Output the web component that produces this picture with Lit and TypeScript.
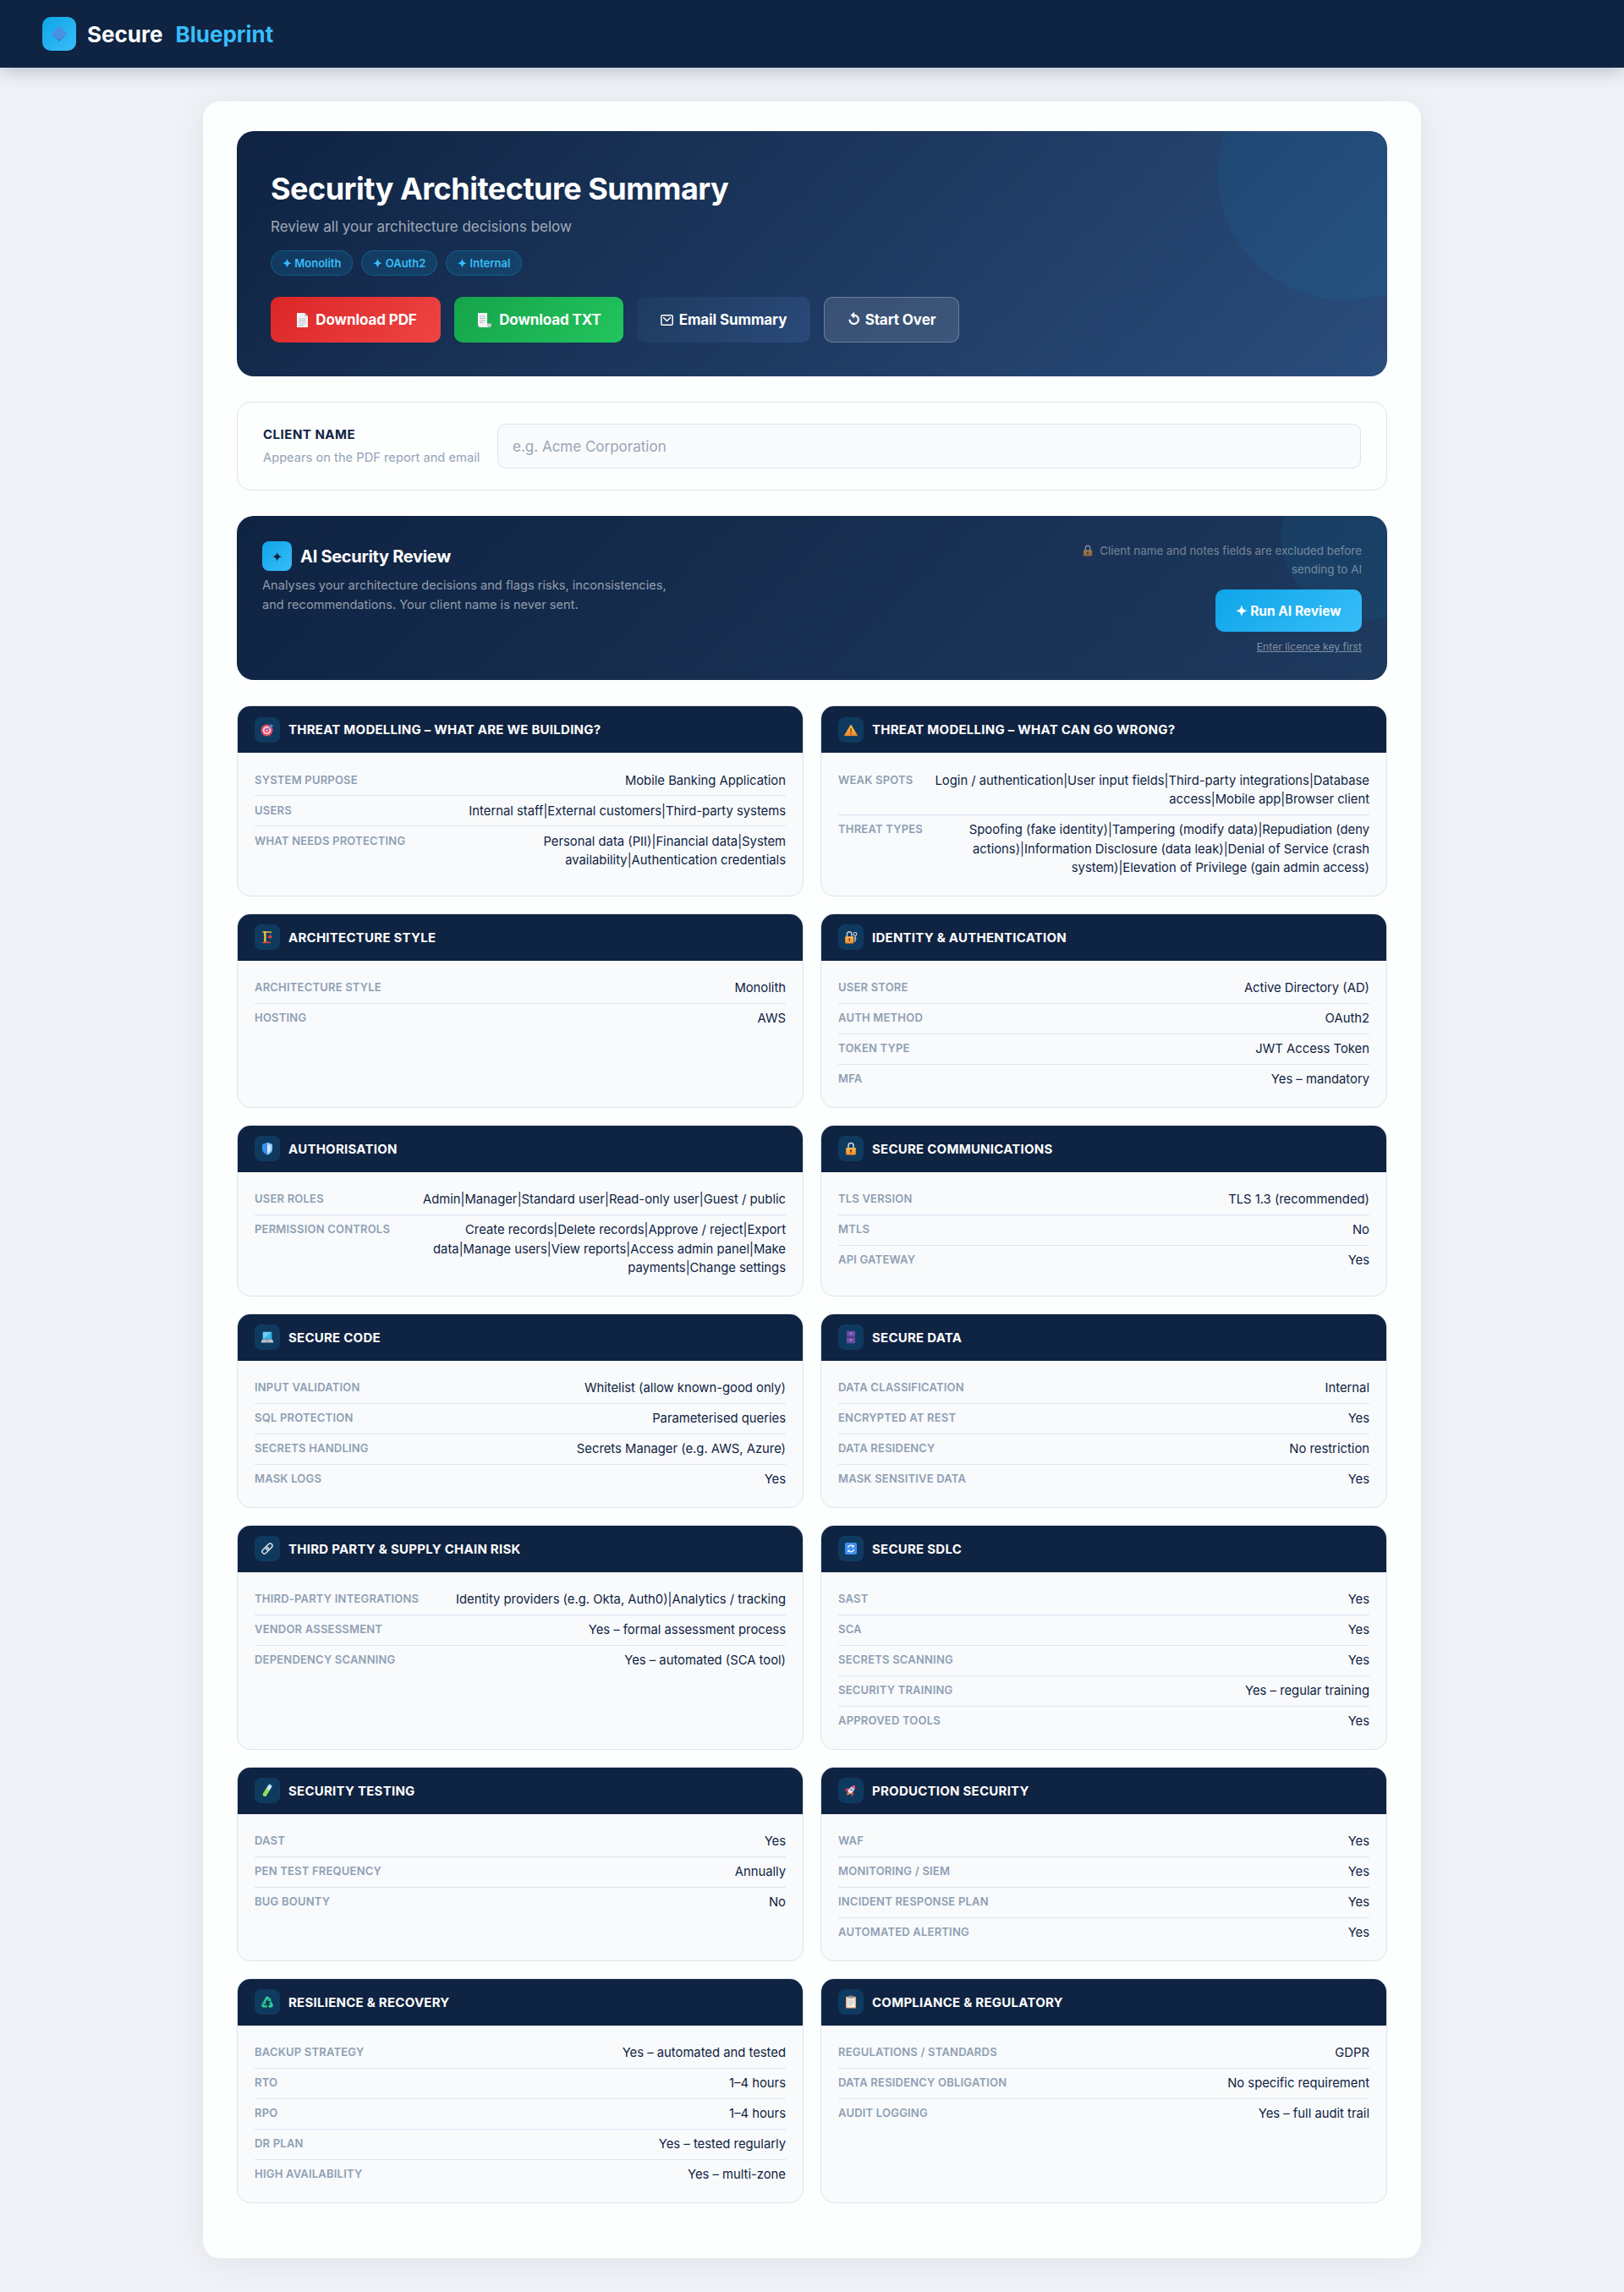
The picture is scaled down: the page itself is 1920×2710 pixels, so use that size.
import { LitElement, html, css, svg } from "lit";
import { customElement } from "lit/decorators.js";

type Row = [string, string];
interface Section { icon: string; title: string; rows: Row[] }

const orangeDef = svg`<defs><linearGradient id="og" x1="0" y1="0" x2="0" y2="1"><stop offset="0" stop-color="#fdbb4e"/><stop offset="1" stop-color="#f28a2a"/></linearGradient></defs>`;

const art: Record<string, unknown> = {
  target: svg`<circle cx="7.5" cy="8.5" r="7" fill="#e8456b"/><circle cx="7.5" cy="8.5" r="4.7" fill="#fbdfe6"/><circle cx="7.5" cy="8.5" r="3" fill="#e8456b"/><circle cx="7.5" cy="8.5" r="1.2" fill="#fbdfe6"/><path d="M7.5 8.5L12.6 3.4" stroke="#3c9eea" stroke-width="1.3"/><path d="M11.4 2.9L13 1l.5 1.6L15.2 3l-2 1.7z" fill="#3c9eea"/>`,
  warn: svg`${orangeDef}<path d="M8 2.2L15.5 14.6H.5z" fill="url(#og)" stroke="url(#og)" stroke-width="1" stroke-linejoin="round"/><rect x="7.3" y="6" width="1.4" height="5" rx=".6" fill="#7a4a12"/><circle cx="8" cy="12.6" r=".85" fill="#7a4a12"/>`,
  crane: svg`<rect x="4" y="1" width="2.6" height="13" fill="#f3c13e"/><path d="M4 3l2.6 2.5M6.6 5.5L4 8l2.6 2.5L4 13" stroke="#9a7420" stroke-width=".5" fill="none"/><rect x="2.2" y="1.4" width="11" height="1.4" fill="#f3c13e"/><rect x="11" y="2.8" width=".6" height="3.4" fill="#55606e"/><rect x="9.2" y="6.2" width="4.2" height="3" fill="#e0443e"/><rect x="2.2" y="13.6" width="9.6" height="1.6" fill="#e0443e"/>`,
  lockkey: svg`${orangeDef}<path d="M3.4 8V4.6a2.8 2.8 0 0 1 5.6 0V8" fill="none" stroke="#c9ced6" stroke-width="1.4"/><rect x="1.2" y="7.2" width="10" height="8.2" rx="1" fill="url(#og)"/><circle cx="6.2" cy="10.6" r="1.1" fill="#5b3712"/><rect x="5.8" y="10.8" width=".8" height="2.4" fill="#5b3712"/><circle cx="13" cy="4.4" r="1.9" fill="none" stroke="#d5d9df" stroke-width="1.1"/><path d="M13 6.300V12.500l-1 .9M13 9.800h1.400" fill="none" stroke="#d5d9df" stroke-width="1.2"/>`,
  shield: svg`<path d="M8 .8L14 3v5.2c0 3.6-2.8 6-6 7.2-3.2-1.2-6-3.6-6-7.2V3z" fill="#3a90ea"/><path d="M8 .8L14 3v5.2c0 3.6-2.8 6-6 7.2z" fill="#8ec8f7"/><path d="M8 3l3.8 1.4v3.8c0 2.3-1.6 3.9-3.8 4.9z" fill="#d5ebfc"/>`,
  lock: svg`${orangeDef}<path d="M5 7.6V4.4a3 3 0 0 1 6 0v3.2" fill="none" stroke="#d6d9de" stroke-width="1.5"/><rect x="2.2" y="7" width="11.6" height="8.4" rx="1" fill="url(#og)"/><circle cx="8" cy="10.5" r="1.2" fill="#5b3712"/><rect x="7.5" y="10.7" width="1" height="2.5" fill="#5b3712"/>`,
  laptop: svg`<rect x="2.4" y="1.4" width="11.2" height="9.4" rx=".8" fill="#5d7f97"/><rect x="3.2" y="2.2" width="9.6" height="7.8" fill="#2fb7f0"/><path d="M3.2 2.2h9.6L3.2 10z" fill="#6ed0f7"/><path d="M2 10.8h12l1.6 3.6H.4z" fill="#bcc3ce"/><rect x="6" y="12" width="4" height="1" fill="#8b94a3"/>`,
  cabinet: svg`<rect x="3" y=".8" width="10" height="14.4" rx=".6" fill="#6a4ea8"/><rect x="3" y="7.5" width="10" height="1" fill="#35295f"/><rect x="6.4" y="3" width="3.2" height="1.4" fill="#a996dc"/><rect x="6.4" y="10.6" width="3.2" height="1.4" fill="#a996dc"/>`,
  chain: svg`<g transform="rotate(-45 8 8)" fill="none" stroke="#c7cfda" stroke-width="1.7"><rect x="0.6" y="5.4" width="8.6" height="5.2" rx="2.6"/><rect x="6.8" y="5.4" width="8.6" height="5.2" rx="2.6"/></g>`,
  sync: svg`<rect x="1" y="1" width="14" height="14" rx="2" fill="#3f8ef0"/><g fill="none" stroke="#fff" stroke-width="1.3"><path d="M4.4 7.2A3.7 3.7 0 0 1 10.8 5.4"/><path d="M11.6 8.8A3.7 3.7 0 0 1 5.2 10.6"/></g><path d="M11.8 3.6v3h-3zM4.2 12.4v-3h3z" fill="#fff"/>`,
  tube: svg`<g transform="rotate(32 8 8)"><rect x="5.8" y=".2" width="4.4" height="15.6" rx="2.2" fill="#cfeafb"/><path d="M5.8 6.5h4.4v7.1a2.2 2.2 0 0 1-4.4 0z" fill="#8fe04a"/><rect x="5.8" y=".2" width="4.4" height="1.6" fill="#8fd0f5"/></g>`,
  rocket: svg`<g transform="rotate(40 8 8)"><path d="M5.4 10.4L2.6 13.6V9.4L5.4 7zM10.6 10.4l2.8 3.2V9.4L10.6 7z" fill="#e23b5a"/><path d="M8 .2c2.6 2.6 3.2 6.4 2.6 11.2H5.4C4.8 6.600 5.4 2.800 8 .2z" fill="#f7d9e4"/><path d="M8 .2c1.1 1.1 1.9 2.4 2.3 3.9H5.7C6.1 2.600 6.9 1.300 8 .2z" fill="#e8476a"/><circle cx="8" cy="6.8" r="1.4" fill="#3f98ea"/><path d="M6 11.600h4L8 15.600z" fill="#f79a2e"/></g>`,
  recycle: svg`<g fill="none" stroke="#2ecf8e" stroke-width="2.6"><path d="M4.800 7.600L7 3.600Q8 2.200 9 3.600L9.600 4.800"/><path d="M11.400 8L13.300 11.400Q14 13 12.400 13.200H11"/><path d="M7.800 13.200H3.600Q2 13 2.700 11.400L3.300 10.300"/></g><g fill="#2ecf8e"><path d="M8.200 6.800L12.600 7.200 11.800 3z"/><path d="M11.800 10.400L8.800 13.200 11.800 15.800z"/><path d="M1.200 8.600L5.600 7.200 6.200 11.200z"/></g>`,
  clip: svg`<rect x="2" y="1.8" width="12" height="13.8" rx="1" fill="#e5ad85"/><rect x="3.6" y="3.6" width="8.8" height="10.6" fill="#fbf4ed"/><rect x="5.2" y=".8" width="5.6" height="2.6" rx=".6" fill="#8a8f99"/><path d="M5 6h6M5 8h6M5 10h6M5 12h4" stroke="#a9adb6" stroke-width=".8"/>`,
};

const ico = (name: string, size = 16) =>
  html`<svg width=${size} height=${size} viewBox="0 0 16 16" aria-hidden="true">${art[name]}</svg>`;

const pageIcon = html`<svg width="13" height="17" viewBox="0 0 13 17" aria-hidden="true"><path d="M0 0h9l4 4v13H0z" fill="#f3f3f6"/><path d="M9 0v4h4z" fill="#c6cad2"/><path d="M2 7h9M2 9.5h9M2 12h9M2 14.5h6" stroke="#b7bcc6" stroke-width="1"/></svg>`;
const scrollIcon = html`<svg width="16" height="17" viewBox="0 0 16 17" aria-hidden="true"><path d="M0 0h11v14c0 1.6 1 3 3 3H3c-2 0-3-1.400-3-3z" fill="#f3f3f6"/><path d="M11 12.500h5V14c0 1.800-1 3-2.200 3-1.600 0-2.800-1.400-2.800-3z" fill="#c6cad2"/><path d="M2 4h7M2 6.500h7M2 9h7M2 11.500h5" stroke="#b7bcc6" stroke-width="1"/></svg>`;
const mailIcon = html`<svg width="15" height="13" viewBox="0 0 15 13" aria-hidden="true"><rect x=".8" y=".8" width="13.400" height="11.400" rx="1.500" fill="none" stroke="#fff" stroke-width="1.500"/><path d="M3.200 3.200l4.300 4.300 4.300-4.300" fill="none" stroke="#fff" stroke-width="1.500"/></svg>`;

const sections: Section[] = [
  { icon: "target", title: "Threat Modelling – What Are We Building?", rows: [
    ["System Purpose", "Mobile Banking Application"],
    ["Users", "Internal staff|External customers|Third-party systems"],
    ["What Needs Protecting", "Personal data (PII)|Financial data|System availability|Authentication credentials"],
  ]},
  { icon: "warn", title: "Threat Modelling – What Can Go Wrong?", rows: [
    ["Weak Spots", "Login / authentication|User input fields|Third-party integrations|Database access|Mobile app|Browser client"],
    ["Threat Types", "Spoofing (fake identity)|Tampering (modify data)|Repudiation (deny actions)|Information Disclosure (data leak)|Denial of Service (crash system)|Elevation of Privilege (gain admin access)"],
  ]},
  { icon: "crane", title: "Architecture Style", rows: [["Architecture Style", "Monolith"], ["Hosting", "AWS"]] },
  { icon: "lockkey", title: "Identity & Authentication", rows: [
    ["User Store", "Active Directory (AD)"], ["Auth Method", "OAuth2"], ["Token Type", "JWT Access Token"], ["MFA", "Yes – mandatory"],
  ]},
  { icon: "shield", title: "Authorisation", rows: [
    ["User Roles", "Admin|Manager|Standard user|Read-only user|Guest / public"],
    ["Permission Controls", "Create records|Delete records|Approve / reject|Export data|Manage users|View reports|Access admin panel|Make payments|Change settings"],
  ]},
  { icon: "lock", title: "Secure Communications", rows: [["TLS Version", "TLS 1.3 (recommended)"], ["mTLS", "No"], ["API Gateway", "Yes"]] },
  { icon: "laptop", title: "Secure Code", rows: [
    ["Input Validation", "Whitelist (allow known-good only)"], ["SQL Protection", "Parameterised queries"],
    ["Secrets Handling", "Secrets Manager (e.g. AWS, Azure)"], ["Mask Logs", "Yes"],
  ]},
  { icon: "cabinet", title: "Secure Data", rows: [
    ["Data Classification", "Internal"], ["Encrypted at Rest", "Yes"], ["Data Residency", "No restriction"], ["Mask Sensitive Data", "Yes"],
  ]},
  { icon: "chain", title: "Third Party & Supply Chain Risk", rows: [
    ["Third-Party Integrations", "Identity providers (e.g. Okta, Auth0)|Analytics / tracking"],
    ["Vendor Assessment", "Yes – formal assessment process"], ["Dependency Scanning", "Yes – automated (SCA tool)"],
  ]},
  { icon: "sync", title: "Secure SDLC", rows: [
    ["SAST", "Yes"], ["SCA", "Yes"], ["Secrets Scanning", "Yes"], ["Security Training", "Yes – regular training"], ["Approved Tools", "Yes"],
  ]},
  { icon: "tube", title: "Security Testing", rows: [["DAST", "Yes"], ["Pen Test Frequency", "Annually"], ["Bug Bounty", "No"]] },
  { icon: "rocket", title: "Production Security", rows: [
    ["WAF", "Yes"], ["Monitoring / SIEM", "Yes"], ["Incident Response Plan", "Yes"], ["Automated Alerting", "Yes"],
  ]},
  { icon: "recycle", title: "Resilience & Recovery", rows: [
    ["Backup Strategy", "Yes – automated and tested"], ["RTO", "1–4 hours"], ["RPO", "1–4 hours"], ["DR Plan", "Yes – tested regularly"], ["High Availability", "Yes – multi-zone"],
  ]},
  { icon: "clip", title: "Compliance & Regulatory", rows: [
    ["Regulations / Standards", "GDPR"], ["Data Residency Obligation", "No specific requirement"], ["Audit Logging", "Yes – full audit trail"],
  ]},
];

@customElement("app-root")
export class AppRoot extends LitElement {
  static styles = css`
    :host {
      display: block;
      background: #f0f2f7;
      min-height: 2710px;
      font-family: Inter, sans-serif;
      color: #0f2342;
    }
    * { box-sizing: border-box; }
    .topbar {
      height: 80px;
      background: #0f2342;
      display: flex;
      align-items: center;
      padding: 0 50px;
      gap: 13px;
      box-shadow: 0 4px 20px rgba(15, 35, 66, 0.25);
    }
    .logo {
      width: 40px; height: 40px; border-radius: 10px;
      background: linear-gradient(135deg, #0ea5e9, #38bdf8);
      display: flex; align-items: center; justify-content: center;
    }
    .brand { display: flex; gap: 15px; font-size: 26px; font-weight: 700; color: #fff; }
    .brand span { color: #38bdf8; }
    .wrap { padding: 40px 240px; }
    .card {
      background: #fdfefe;
      border-radius: 20px;
      padding: 35px 40px 65px;
      box-shadow: 0 4px 40px rgba(15, 35, 66, 0.07);
      display: flex; flex-direction: column; gap: 30px;
    }
    .hero {
      position: relative; overflow: hidden;
      height: 290px;
      border-radius: 20px;
      padding: 40px;
      background: linear-gradient(135deg, #0f2342, #2a4d7c);
      color: #fff;
    }
    .hero::before {
      content: ""; position: absolute; top: -100px; right: -100px;
      width: 300px; height: 300px; border-radius: 50%;
      background: rgba(14, 165, 233, 0.08);
    }
    h1 { margin: 0; font-size: 36px; line-height: 56px; font-weight: 700; letter-spacing: -0.5px; }
    .sub { margin: 0; font-size: 17px; line-height: 24px; padding-top: 5px; box-sizing: content-box; color: rgba(255, 255, 255, 0.6); }
    .chips { display: flex; gap: 10px; margin-top: 16px; }
    .chip {
      height: 30px; display: flex; align-items: center; padding: 0 13px;
      border-radius: 15px; font-size: 13px; font-weight: 600; color: #38bdf8;
      background: rgba(14, 165, 233, 0.15);
      border: 1px solid rgba(14, 165, 233, 0.3);
    }
    .actions { display: flex; gap: 16px; margin-top: 25px; position: relative; }
    .btn {
      height: 54px; border-radius: 10px;
      display: flex; align-items: center; justify-content: center; gap: 9px;
      color: #fff; font-size: 17px; font-weight: 700; letter-spacing: -0.1px;
    }
    .pdf { width: 201px; padding-left: 3px; background: linear-gradient(135deg, #dc2626, #ef4444); }
    .txt { width: 200px; padding-left: 2px; background: linear-gradient(135deg, #16a34a, #22c55e); }
    .mail { width: 205px; gap: 7px; background: linear-gradient(135deg, #1e3a5f, #2a4a7a); }
    .over { width: 160px; background: rgba(255, 255, 255, 0.12); border: 1px solid rgba(255, 255, 255, 0.25); gap: 5px; }
    .client {
      height: 105px; border: 1.5px solid #dde3ee; border-radius: 16px;
      background: #fdfefe;
      padding: 0 30px; display: flex; align-items: center; gap: 20px;
    }
    .client-label { width: 257px; flex: none; padding-bottom: 2px; }
    .client-label b { display: block; font-size: 15px; line-height: 22px; font-weight: 700; letter-spacing: 0.5px; }
    .client-label small { display: block; font-size: 14.7px; line-height: 20px; margin-top: 6px; color: #94a3b8; white-space: nowrap; }
    input {
      flex: 1; height: 53px; border: 1.5px solid #dde3ee; border-radius: 10px;
      background: #f8fafc; padding: 0 17px; font: 400 17px Inter, sans-serif; color: #0f2342;
    }
    input::placeholder { color: #9aa5b4; }
    .ai {
      position: relative; overflow: hidden;
      height: 194px; border-radius: 20px; padding: 30px;
      background: linear-gradient(135deg, #0f2342, #1e3a5f);
      display: flex; justify-content: space-between; color: #fff;
    }
    .ai::before {
      content: ""; position: absolute; top: -77px; right: -75px;
      width: 200px; height: 200px; border-radius: 50%;
      background: rgba(14, 165, 233, 0.08);
    }
    .ai-left, .ai-right { position: relative; }
    .ai-head { display: flex; align-items: center; gap: 10px; }
    .ai-icon {
      width: 35px; height: 35px; border-radius: 8px; color: #0f2342;
      background: linear-gradient(135deg, #0ea5e9, #38bdf8);
      display: flex; align-items: center; justify-content: center; font-size: 16px;
    }
    .ai-title { font-size: 20px; font-weight: 700; letter-spacing: -0.3px; }
    .ai-desc { margin: 6px 0 0; width: 490px; font-size: 14.6px; line-height: 23px; color: rgba(255, 255, 255, 0.55); }
    .ai-right { display: flex; flex-direction: column; align-items: flex-end; width: 340px; }
    .notice { margin: 0; text-align: right; font-size: 13.4px; line-height: 22px; color: rgba(255, 255, 255, 0.4); }
    .notice svg { vertical-align: -2px; margin-right: 3px; opacity: 0.55; }
    .run {
      margin-top: 13px; width: 173px; height: 50px; border-radius: 10px;
      background: linear-gradient(135deg, #0ea5e9, #38bdf8);
      display: flex; align-items: center; justify-content: center;
      font-size: 15.5px; font-weight: 700; color: #fff;
    }
    .hint { margin-top: 10px; font-size: 12.2px; line-height: 16px; text-decoration: underline; color: rgba(255, 255, 255, 0.45); }
    .grid { display: grid; grid-template-columns: 1fr 1fr; gap: 20px; }
    .sec {
      border: 1px solid #dde5ef; border-radius: 16px; overflow: hidden;
      background: #f8fafc; display: flex; flex-direction: column;
    }
    .sec-head {
      height: 55px; flex: none; background: #0f2342; padding: 0 20px;
      display: flex; align-items: center; gap: 10px;
      color: #fff; font-size: 15px; font-weight: 700; text-transform: uppercase; letter-spacing: 0.25px;
    }
    .sec-icon {
      width: 30px; height: 30px; border-radius: 8px; flex: none;
      background: rgba(14, 165, 233, 0.18);
      display: flex; align-items: center; justify-content: center;
    }
    .sec-body { padding: 15px 20px; }
    .row {
      display: flex; justify-content: space-between; gap: 20px;
      padding: 6.5px 0 6px; border-bottom: 1px solid #dbe4f0;
    }
    .row:last-child { border-bottom: 0; }
    .k {
      flex: none; font-size: 13px; line-height: 20px; font-weight: 600; color: #8f9fb3;
      text-transform: uppercase; letter-spacing: 0.2px;
    }
    .v { text-align: right; font-size: 14.8px; line-height: 22.5px; font-weight: 400; color: #0f2342; }
  `;

  render() {
    return html`
      <div class="topbar">
        <div class="logo">
          <svg width="20" height="20" viewBox="0 0 20 20" aria-hidden="true"><path d="M10 .8L19.200 10 10 19.200.8 10z" fill="#4a90e2"/><path d="M.8 10L10 19.200 19.200 10 10 17.500z" fill="#3d7acb"/></svg>
        </div>
        <div class="brand">Secure <span>Blueprint</span></div>
      </div>
      <div class="wrap">
        <div class="card">
          <section class="hero">
            <h1>Security Architecture Summary</h1>
            <p class="sub">Review all your architecture decisions below</p>
            <div class="chips">
              <div class="chip">✦ Monolith</div>
              <div class="chip">✦ OAuth2</div>
              <div class="chip">✦ Internal</div>
            </div>
            <div class="actions">
              <div class="btn pdf">${pageIcon}<span>Download PDF</span></div>
              <div class="btn txt">${scrollIcon}<span>Download TXT</span></div>
              <div class="btn mail">${mailIcon}<span>Email Summary</span></div>
              <div class="btn over"><span>↺</span><span>Start Over</span></div>
            </div>
          </section>
          <section class="client">
            <div class="client-label">
              <b>CLIENT NAME</b>
              <small>Appears on the PDF report and email</small>
            </div>
            <input placeholder="e.g. Acme Corporation" />
          </section>
          <section class="ai">
            <div class="ai-left">
              <div class="ai-head">
                <div class="ai-icon">✦</div>
                <div class="ai-title">AI Security Review</div>
              </div>
              <p class="ai-desc">Analyses your architecture decisions and flags risks, inconsistencies, and recommendations. Your client name is never sent.</p>
            </div>
            <div class="ai-right">
              <p class="notice">${ico("lock", 14)} Client name and notes fields are excluded before sending to AI</p>
              <div class="run">✦ Run AI Review</div>
              <div class="hint">Enter licence key first</div>
            </div>
          </section>
          <div class="grid">
            ${sections.map((s) => html`
              <section class="sec">
                <div class="sec-head"><div class="sec-icon">${ico(s.icon)}</div>${s.title}</div>
                <div class="sec-body">
                  ${s.rows.map(([k, v]) => html`<div class="row"><div class="k">${k}</div><div class="v">${v}</div></div>`)}
                </div>
              </section>
            `)}
          </div>
        </div>
      </div>
    `;
  }
}
